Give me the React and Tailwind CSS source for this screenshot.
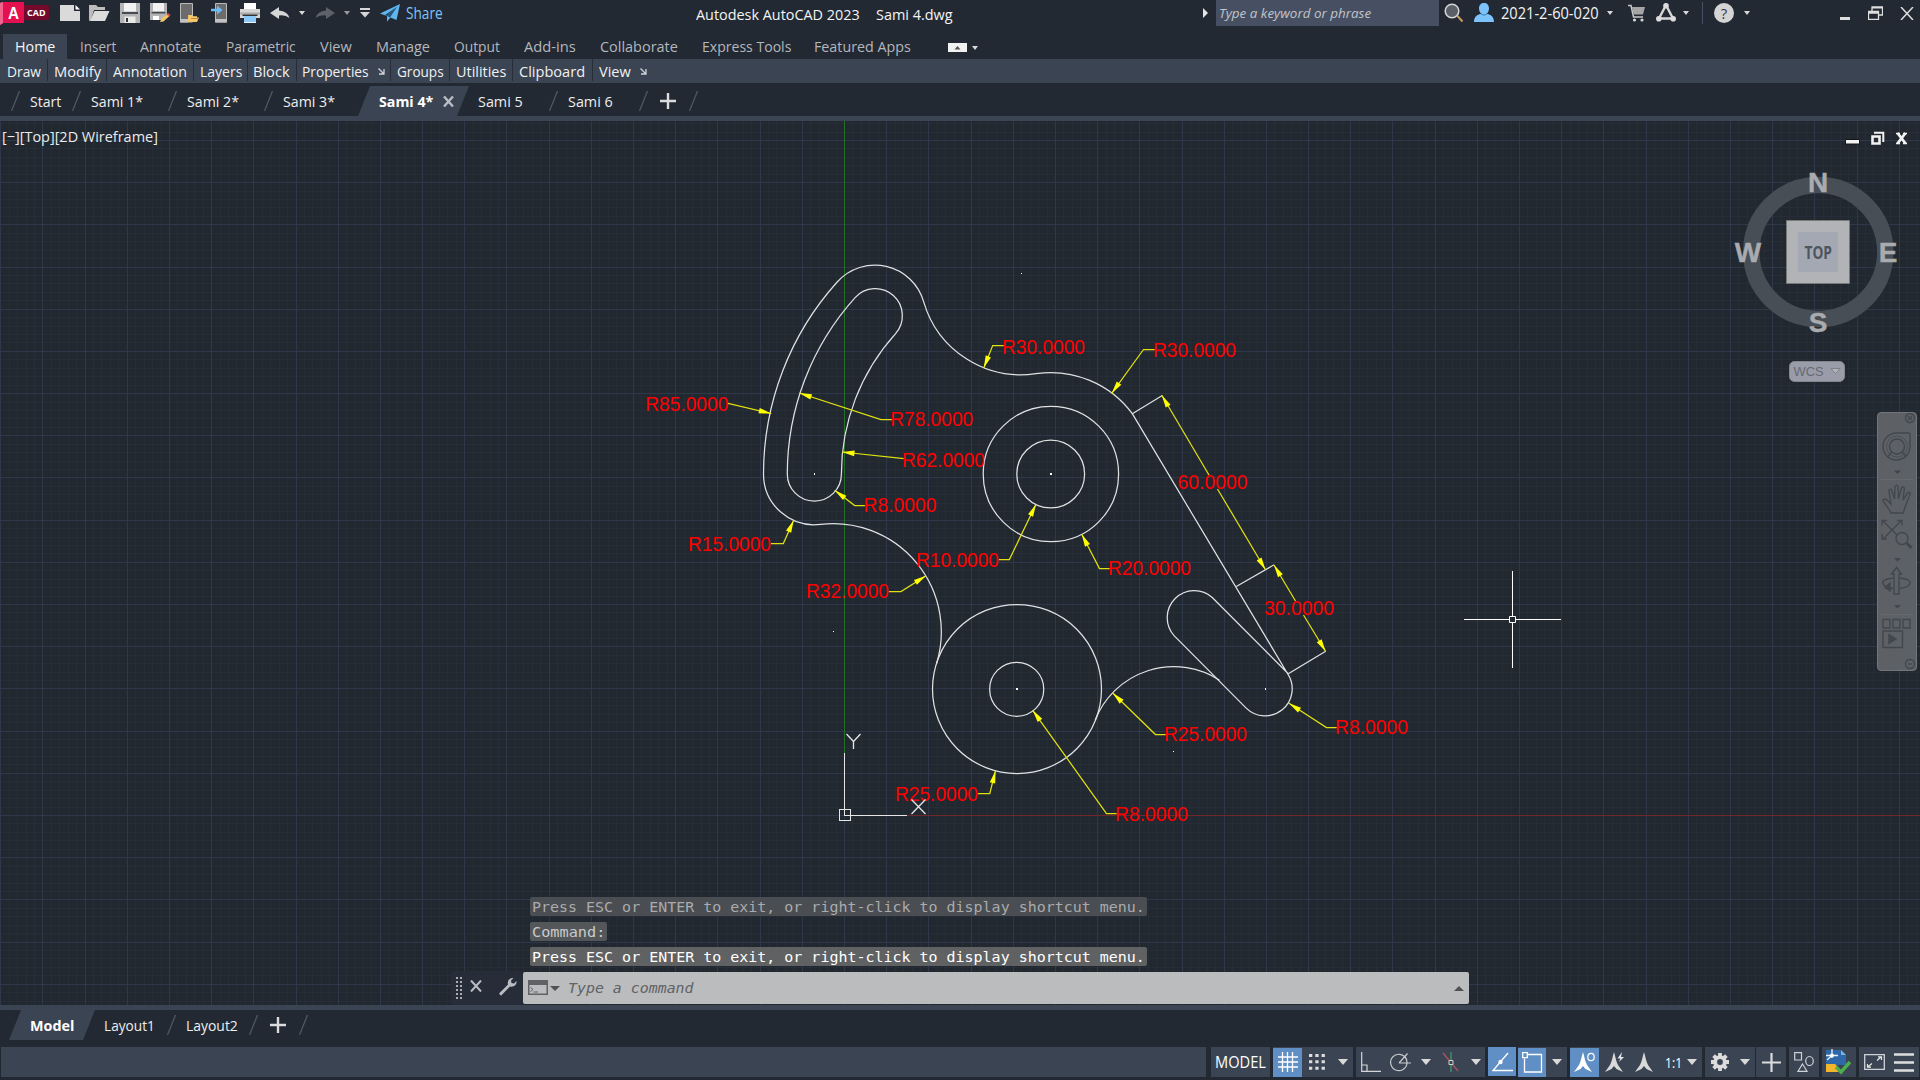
import React, { useLayoutEffect, useRef, useState } from "react";

/* Text that is condensed or widened to fill the width of its box. */
function Fit({ className = "", children }) {
  const box = useRef(null);
  const text = useRef(null);
  const [scale, setScale] = useState(1);
  useLayoutEffect(() => {
    setScale(box.current.clientWidth / text.current.offsetWidth);
  }, []);
  return (
    <span ref={box} className={"block shrink-0 whitespace-nowrap " + className}>
      <span ref={text} className="inline-block origin-left" style={{ transform: `scaleX(${scale})` }}>
        {children}
      </span>
    </span>
  );
}

function Icon({ w, h, className = "", children }) {
  return (
    <svg width={w} height={h} viewBox={`0 0 ${w} ${h}`} className={"block shrink-0 " + className} fill="none">
      {children}
    </svg>
  );
}

function Caret({ className = "", color = "#d9d9d9", w = 6, h = 4 }) {
  return (
    <Icon w={w} h={h} className={className}>
      <path d={`M0 0H${w}L${w / 2} ${h}Z`} fill={color} />
    </Icon>
  );
}

function Slash({ className = "" }) {
  return (
    <Icon w={9} h={20} className={className}>
      <path d="M8.5 0L0.5 20" stroke="#4d5766" strokeWidth="1.3" />
    </Icon>
  );
}

function Plus({ className = "" }) {
  return (
    <Icon w={16} h={16} className={className}>
      <path d="M8 0V16M0 8H16" stroke="#dcdcdc" strokeWidth="2.4" />
    </Icon>
  );
}

function TitleBar() {
  return (
    <div className="flex h-[34px] items-start">
      <Icon w={49} h={25}>
        <path d="M0 3L4 2V22L0 25Z" fill="#ee5c87" />
        <path d="M3 2H24V23H3L0 25V3Z" fill="#e51050" />
        <path d="M0 3L3 2V23L0 25Z" fill="#f0648e" />
        <path d="M24 5H47Q49 5 49 7V18Q49 20 47 20H24Z" fill="#730a2b" />
        <text x="8" y="19" fontSize="16" fontWeight="700" fill="#fff" fontFamily="Liberation Sans, sans-serif" textLength="11" lengthAdjust="spacingAndGlyphs">A</text>
        <text x="27" y="16" fontSize="9.5" fontWeight="700" fill="#fff" fontFamily="Open Sans, sans-serif" textLength="18.5" lengthAdjust="spacingAndGlyphs">CAD</text>
      </Icon>
      <Icon w={20} h={18} className="ml-[11px] mt-[4px]">
        <path d="M0 1H14V7H20V17H0Z" fill="#dadada" />
        <path d="M15.500 1L20 5.500H15.500Z" fill="#fff" />
      </Icon>
      <Icon w={21} h={18} className="ml-[9px] mt-[4px]">
        <path d="M0 17V1H7L9 3H16V6H5L2 16Z" fill="#bdbdbd" />
        <path d="M5.500 7H20.500L16 17H1Z" fill="#dcdcdc" />
      </Icon>
      <Icon w={20} h={20} className="ml-[10px] mt-[3px]">
        <path d="M0 0H20V20H0Z" fill="#b4b4b4" />
        <path d="M4 0H16V8.500H4Z" fill="#f2f2f2" />
        <path d="M2 9H18V11H2Z" fill="#454b55" />
        <path d="M4.500 13.500H15.500V20H4.500Z" fill="#e9e9e9" />
        <path d="M6 15H8V19H6Z" fill="#333" />
      </Icon>
      <Icon w={21} h={20} className="ml-[10px] mt-[3px]">
        <path d="M0 0H17V11L11 17H0Z" fill="#b4b4b4" />
        <path d="M3 0H14V8H3Z" fill="#f2f2f2" />
        <path d="M1.500 9H15.500V10.500H1.500Z" fill="#454b55" />
        <path d="M3 13H9V17H3Z" fill="#fff" />
        <path d="M10 19L11.500 15.500L17 11L19.500 13L13.500 18.500Z" fill="#f6c66b" />
        <path d="M16.500 11.500L18 10L20.500 12.200L19 13.800Z" fill="#e2574c" />
      </Icon>
      <Icon w={19} h={20} className="ml-[9px] mt-[3px]">
        <path d="M0.500 0.500H12.500V19H0.500Z" fill="#6c6c6c" stroke="#b9b9b9" />
        <path d="M0 16H8V19.500H0Z" fill="#c2c2c2" />
        <path d="M8 18V12H12L13 13.200H17V14.500H19L17 19H8Z" fill="#f6c66b" />
        <path d="M11 15.500H18" stroke="#b88a3a" />
      </Icon>
      <Icon w={17} h={20} className="ml-[12px] mt-[3px]">
        <path d="M4.500 0.500H15.500V19H4.500Z" fill="#6c6c6c" stroke="#b9b9b9" />
        <path d="M4 16H16V19.500H4Z" fill="#c2c2c2" />
        <path d="M0 5.800H6V2.500L11.500 7L6 11.500V8.300H0Z" fill="#6cbcf7" />
      </Icon>
      <Icon w={20} h={20} className="ml-[12px] mt-[3px]">
        <path d="M4 0H16V6H4Z" fill="#fff" />
        <path d="M0 6H20V15H0Z" fill="#d6d6d6" />
        <path d="M0 9.500H20V11.500H0Z" fill="#aaa" />
        <path d="M2.500 11.500H17.500V13H2.500Z" fill="#333" />
        <path d="M4 13H16V20H4Z" fill="#8cc9fb" />
        <path d="M4 19H16V20H4Z" fill="#e9f4ff" />
      </Icon>
      <Icon w={20} h={14} className="ml-[10px] mt-[6px]">
        <path d="M0 7L9 1V4.500Q17.500 5 19.500 12Q15 8.500 9 9.500V13Z" fill="#d5d5d5" />
      </Icon>
      <Caret className="ml-[9px] mt-[11px]" />
      <Icon w={20} h={14} className="ml-[10px] mt-[6px]">
        <path d="M20 7L11 1V4.500Q2.500 5 0.500 12Q5 8.500 11 9.500V13Z" fill="#5d6269" />
      </Icon>
      <Caret className="ml-[9px] mt-[11px]" color="#999" />
      <Icon w={10} h={10} className="ml-[10px] mt-[8px]">
        <path d="M0 0H10V2H0ZM0 4H10L5 9.500Z" fill="#d5d5d5" />
      </Icon>
      <Icon w={20} h={18} className="ml-[10px] mt-[4px]">
        <path d="M0 9.500L20 0L16.500 16L10.500 13.500L7 17.500V12Z" fill="#62b5ee" />
        <path d="M7 12L17 3L10 13.500Z" fill="#25577c" />
        <path d="M7 12L17.500 2.500L5 11Z" fill="#1f4461" />
      </Icon>
      <Fit className="ml-[6px] mt-[1px] w-[37px] text-[15.500px] leading-[25px] text-[#7cc4f8]">Share</Fit>
      <Fit className="ml-[253px] mt-[2px] w-[164px] text-[15px] leading-[24px] text-[#f4f4f4]">Autodesk AutoCAD 2023</Fit>
      <Fit className="ml-[16px] mt-[2px] w-[77px] text-[15px] leading-[24px] text-[#f4f4f4]">Sami 4.dwg</Fit>
      <Icon w={5} h={10} className="ml-[250px] mt-[8px]">
        <path d="M0 0L5 5L0 10Z" fill="#e4e4e4" />
      </Icon>
      <div className="ml-[8px] h-[26px] w-[223px] bg-[#475063] pl-[3px]">
        <Fit className="w-[152px] text-[13.500px] italic leading-[26px] text-[#c1c4ca]">Type a keyword or phrase</Fit>
      </div>
      <Icon w={20} h={20} className="ml-[5px] mt-[3px]">
        <path d="M13.500 13L18.500 18.500" stroke="#c89a62" strokeWidth="2" />
        <circle cx="8" cy="8" r="6.800" fill="#596068" stroke="#d6d6d6" strokeWidth="1.500" />
      </Icon>
      <Icon w={20} h={20} className="ml-[10px] mt-[3px]">
        <path d="M10 0C13 0 15 2 15 5.500C15 8 13.800 9.800 12.500 10.800C17 11.500 20 14 20 19H0C0 14 3 11.500 7.500 10.800C6.200 9.800 5 8 5 5.500C5 2 7 0 10 0Z" fill="#7cc4fb" />
        <path d="M7 11Q10 13.500 13 11" stroke="#3e7fb0" />
      </Icon>
      <Fit className="ml-[7px] mt-[1px] w-[98px] text-[15.500px] leading-[25px] text-[#f4f4f4]">2021-2-60-020</Fit>
      <Caret className="ml-[8px] mt-[11px]" />
      <Icon w={18} h={18} className="ml-[15px] mt-[4px]">
        <path d="M0 1.500H3L5.500 13H15" stroke="#c9c9c9" strokeWidth="1.500" />
        <path d="M4 3H17L15 10.500H5.500Z" fill="#a5a5a5" />
        <circle cx="6.500" cy="16" r="1.600" fill="#d6d6d6" />
        <circle cx="14" cy="16" r="1.600" fill="#d6d6d6" />
      </Icon>
      <Icon w={20} h={19} className="ml-[10px] mt-[3px]">
        <path d="M10 2L17 15.500H3Z" stroke="#d6d6d6" strokeWidth="2.400" />
        <circle cx="10" cy="2.800" r="2.800" fill="#dcdcdc" />
        <circle cx="2.800" cy="15.700" r="2.800" fill="#dcdcdc" />
        <circle cx="17.200" cy="15.700" r="2.800" fill="#dcdcdc" />
      </Icon>
      <Caret className="ml-[7px] mt-[11px]" />
      <div className="ml-[13px] mt-[2px] h-[22px] w-px bg-[#465063]" />
      <Icon w={20} h={20} className="ml-[11px] mt-[3px]">
        <circle cx="10" cy="10" r="10" fill="#d4d4d4" />
        <text x="10" y="15.500" fontSize="15" fill="#333a44" textAnchor="middle" fontFamily="Open Sans, sans-serif">?</text>
      </Icon>
      <Caret className="ml-[10px] mt-[11px]" />
      <Icon w={10} h={3} className="ml-[90px] mt-[17px]">
        <path d="M0 0H10V3H0Z" fill="#dedede" />
      </Icon>
      <Icon w={15} h={14} className="ml-[18px] mt-[6px]">
        <path d="M0.500 5.500H10.500V13.300H0.500ZM0.500 7H10.500M4 5V1H14.500V9H11M4 1.800H14.500" stroke="#dedede" strokeWidth="1.300" />
      </Icon>
      <Icon w={14} h={13} className="ml-[17px] mt-[7px]">
        <path d="M1 0L13 13M13 0L1 13" stroke="#dedede" strokeWidth="1.500" />
      </Icon>
    </div>
  );
}

function RibbonTabs() {
  const t = "text-[15px] leading-[25px] text-[#b4b7bc] ";
  return (
    <div className="flex h-[25px] items-start pl-[3px]">
      <div className="h-[25px] w-[64px] bg-[#3b4453] pl-[12px]">
        <Fit className="w-[40px] text-[15px] leading-[25px] text-[#f5f5f5]">Home</Fit>
      </div>
      <Fit className={t + "ml-[13px] w-[36px]"}>Insert</Fit>
      <Fit className={t + "ml-[24px] w-[61px]"}>Annotate</Fit>
      <Fit className={t + "ml-[25px] w-[70px]"}>Parametric</Fit>
      <Fit className={t + "ml-[24px] w-[32px]"}>View</Fit>
      <Fit className={t + "ml-[24px] w-[54px]"}>Manage</Fit>
      <Fit className={t + "ml-[24px] w-[46px]"}>Output</Fit>
      <Fit className={t + "ml-[24px] w-[52px]"}>Add-ins</Fit>
      <Fit className={t + "ml-[24px] w-[78px]"}>Collaborate</Fit>
      <Fit className={t + "ml-[24px] w-[89px]"}>Express Tools</Fit>
      <Fit className={t + "ml-[23px] w-[97px]"}>Featured Apps</Fit>
      <Icon w={19} h={9} className="ml-[37px] mt-[9px]">
        <path d="M0 0H19V9H0Z" fill="#f2f2f2" />
        <path d="M6.500 6.500H12.500L9.500 3Z" fill="#555" />
      </Icon>
      <Caret className="ml-[5px] mt-[12px]" />
    </div>
  );
}

function Launcher({ className }) {
  return (
    <Icon w={7} h={7} className={className}>
      <path d="M0.500 0.500L5.500 5.500M6 1V6H1" stroke="#d0d3d8" strokeWidth="1.300" />
    </Icon>
  );
}

function RibbonPanels() {
  const t = "text-[15px] leading-[25px] text-[#f1f1f1] ";
  const d = <div className="h-[22px] w-px shrink-0 bg-[#262d38]" />;
  return (
    <div className="flex h-[24px] items-start bg-[#3b4453] pl-[7px]">
      <Fit className={t + "mr-[6px] w-[34px]"}>Draw</Fit>
      {d}
      <Fit className={t + "ml-[6px] mr-[5px] w-[47px]"}>Modify</Fit>
      {d}
      <Fit className={t + "ml-[6px] mr-[6px] w-[74px]"}>Annotation</Fit>
      {d}
      <Fit className={t + "ml-[6px] mr-[5px] w-[42px]"}>Layers</Fit>
      {d}
      <Fit className={t + "ml-[5px] mr-[6px] w-[37px]"}>Block</Fit>
      {d}
      <Fit className={t + "ml-[5px] w-[67px]"}>Properties</Fit>
      <Launcher className="ml-[9px] mr-[5px] mt-[9px]" />
      {d}
      <Fit className={t + "ml-[6px] mr-[5px] w-[47px]"}>Groups</Fit>
      {d}
      <Fit className={t + "ml-[6px] mr-[6px] w-[50px]"}>Utilities</Fit>
      {d}
      <Fit className={t + "ml-[6px] mr-[7px] w-[66px]"}>Clipboard</Fit>
      {d}
      <Fit className={t + "ml-[6px] w-[32px]"}>View</Fit>
      <Launcher className="ml-[9px] mt-[9px]" />
    </div>
  );
}

function FileTabs() {
  const t = "text-[15px] leading-[37px] text-[#eeeeee] ";
  return (
    <div className="flex h-[33px] items-start pl-[11px]">
      <Slash className="mt-[8px]" />
      <Fit className={t + "ml-[10px] w-[31px]"}>Start</Fit>
      <Slash className="ml-[11px] mt-[8px]" />
      <Fit className={t + "ml-[10px] w-[52px]"}>Sami 1*</Fit>
      <Slash className="ml-[25px] mt-[8px]" />
      <Fit className={t + "ml-[10px] w-[52px]"}>Sami 2*</Fit>
      <Slash className="ml-[25px] mt-[8px]" />
      <Fit className={t + "ml-[10px] w-[52px]"}>Sami 3*</Fit>
      <div className="ml-[23px] mt-[3px] flex h-[30px] w-[111px] bg-[#3b4453] pl-[21px] [clip-path:polygon(12px_0,111px_0,99px_100%,0_100%)]">
        <Fit className="w-[54px] text-[15px] font-bold leading-[31px] text-white">Sami 4*</Fit>
        <Icon w={11} h={11} className="ml-[10px] mt-[10px]">
          <path d="M1 0.500L10 10.500M10 0.500L1 10.500" stroke="#b9bdc4" strokeWidth="2.400" />
        </Icon>
      </div>
      <Fit className={t + "ml-[9px] w-[45px]"}>Sami 5</Fit>
      <Slash className="ml-[26px] mt-[8px]" />
      <Fit className={t + "ml-[10px] w-[45px]"}>Sami 6</Fit>
      <Slash className="ml-[26px] mt-[8px]" />
      <Plus className="ml-[12px] mt-[10px]" />
      <Slash className="ml-[13px] mt-[8px]" />
    </div>
  );
}

const PITCH = 42.19 / 5;
const ORIGIN = { x: 844, y: 815 };
const columns = [];
for (let i = -101; i <= 128; i++) {
  const x = Math.round(ORIGIN.x + i * PITCH);
  if (x >= 0 && x < 1920) columns.push({ x, major: i % 5 === 0 });
}
const rows = [];
for (let i = -83; i <= 23; i++) {
  const y = Math.round(ORIGIN.y + i * PITCH);
  if (y >= 121 && y < 1005) rows.push({ y, major: i % 5 === 0 });
}

function Grid() {
  const v = (m) => columns.filter((c) => c.major === m).map((c) => `M${c.x} 121h1v884h-1z`).join("");
  const h = (m) => rows.filter((r) => r.major === m).map((r) => `M0 ${r.y}h1920v1h-1920z`).join("");
  return (
    <g shapeRendering="crispEdges">
      <path d={v(false) + h(false)} fill="#262d37" />
      <path d={v(true) + h(true)} fill="#2f384a" />
      <path d="M844 121h1v632h-1z" fill="#257029" />
      <path d="M907 815h1013v1h-1013z" fill="#70262b" />
    </g>
  );
}

/* Leaders: the first point of each line is the arrow tip. */
const leaders = [
  { text: "R30.0000", x: 1003, y: 353.7, w: 82, pts: [[983.7, 368], [992.7, 345.5], [1004, 345.5]] },
  { text: "R30.0000", x: 1154, y: 357, w: 82, pts: [[1111.7, 393.3], [1143.5, 349.5], [1155, 349.5]] },
  { text: "R85.0000", x: 646.3, y: 411, w: 82, pts: [[771.3, 413.5], [728, 403.3]] },
  { text: "R78.0000", x: 891.2, y: 425.7, w: 82, pts: [[799.3, 393], [881, 419.5], [892, 419.5]] },
  { text: "R62.0000", x: 903, y: 466.7, w: 82, pts: [[842, 452], [904, 458.7]] },
  { text: "R8.0000", x: 864.5, y: 511.5, w: 72, pts: [[834.7, 490.3], [854.7, 505.5], [865, 505.5]] },
  { text: "R15.0000", x: 689, y: 550.7, w: 82, pts: [[793.7, 520.3], [783.3, 543.5], [771, 543.5]] },
  { text: "R10.0000", x: 917, y: 566.7, w: 82, pts: [[1036, 504.3], [1009.4, 559.5], [999, 559.5]] },
  { text: "R20.0000", x: 1109, y: 574.7, w: 82, pts: [[1081.7, 534.3], [1099.5, 568.5], [1110, 568.5]] },
  { text: "R32.0000", x: 807, y: 597.5, w: 82, pts: [[926, 575.7], [901, 591.5], [889, 591.5]] },
  { text: "R25.0000", x: 896, y: 800.5, w: 82, pts: [[995.5, 770.7], [989.8, 793.5], [978, 793.5]] },
  { text: "R8.0000", x: 1116, y: 820.5, w: 72, pts: [[1032.7, 710.3], [1106.5, 813.5], [1117, 813.5]] },
  { text: "R25.0000", x: 1165, y: 740.5, w: 82, pts: [[1112.7, 693], [1155.5, 734.5], [1166, 734.5]] },
  { text: "R8.0000", x: 1336, y: 733.5, w: 72, pts: [[1289, 703.3], [1326.5, 727.5], [1337, 727.5]] },
  { text: "60.0000", x: 1178.5, y: 489, w: 69, pts: [[1161.8, 395.3], [1209, 475]] },
  { text: null, pts: [[1265.5, 569.8], [1217.5, 489]] },
  { text: "30.0000", x: 1265, y: 615, w: 69, pts: [[1274, 565], [1295.5, 601]] },
  { text: null, pts: [[1325.7, 651.5], [1303.5, 615]] },
];

function Arrow({ tip, from }) {
  const dx = from[0] - tip[0];
  const dy = from[1] - tip[1];
  const len = Math.hypot(dx, dy);
  const ux = dx / len;
  const uy = dy / len;
  const bx = tip[0] + ux * 12.5;
  const by = tip[1] + uy * 12.5;
  return <path d={`M${tip[0]} ${tip[1]}L${bx - uy * 2.8} ${by + ux * 2.8}L${bx + uy * 2.8} ${by - ux * 2.8}Z`} fill="#ffff00" />;
}

function Drawing() {
  return (
    <svg width="1920" height="884" viewBox="0 121 1920 884" className="block">
      <Grid />
      <g fill="none" stroke="#dfe1e3" strokeWidth="1.250">
        <path d="M763.500 474A287.300 287.300 0 0 1 837.200 282A50.700 50.700 0 0 1 923.700 301.800A101.400 101.400 0 0 0 1036 373.650A101.400 101.400 0 0 1 1132.300 413.700L1287.900 674.200A27.040 27.040 0 0 1 1246.200 708.100L1174.300 635.900A27.040 27.040 0 0 1 1212.500 597.700L1288.300 673.700" />
        <path d="M763.500 474A50.700 50.700 0 0 0 820.700 524.300A108.160 108.160 0 0 1 936.500 663.700" />
        <path d="M787.300 474A263.600 263.600 0 0 1 855.100 297.600A27.040 27.040 0 0 1 895.400 333.800A209.600 209.600 0 0 0 841.400 474A27.040 27.040 0 0 1 787.300 474Z" />
        <circle cx="1050.900" cy="474" r="67.700" />
        <circle cx="1050.700" cy="474" r="33.900" />
        <circle cx="1017" cy="689" r="84.500" />
        <circle cx="1016.700" cy="689.300" r="27.040" />
        <path d="M1095.100 720.200A84.500 84.500 0 0 1 1219.500 680.200" />
        <path d="M1132.300 413.700L1162.300 395.500M1236.300 586.500L1274 564.800M1288.300 673.700L1325.700 651.300" />
      </g>
      <path d="M814 473h1v2h-1zM1050 473h2v2h-2zM1016 688h2v2h-2zM1265 688h1v2h-1zM1021 273h1v1h-1zM833 631h1v1h-1zM1173 751h1v1h-1z" fill="#fff" />
      <g fill="none" stroke="#e0e010" strokeWidth="1.250">
        {leaders.map((l, i) => (
          <polyline key={i} points={l.pts.map((p) => p.join(",")).join(" ")} />
        ))}
      </g>
      {leaders.map((l, i) => (
        <Arrow key={i} tip={l.pts[0]} from={l.pts[1]} />
      ))}
      <g fill="#ff0000" fontSize="19.600" fontFamily="Liberation Sans, Arial, sans-serif">
        {leaders.filter((l) => l.text).map((l, i) => (
          <text key={i} x={l.x - 1} y={l.y} textLength={l.w + 1} lengthAdjust="spacingAndGlyphs">{l.text}</text>
        ))}
      </g>
      <g fill="none" stroke="#e6e6e6" strokeWidth="1.300">
        <path d="M844.500 753V815.500H907" shapeRendering="crispEdges" />
        <path d="M839.500 809.500H850.500V820.500H839.500Z" shapeRendering="crispEdges" />
        <path d="M846.500 734L853.500 741.500L860.500 734M853.500 741.500V749" />
        <path d="M911.500 799.500L925.500 814M925.500 799.500L911.500 814" />
      </g>
      <path d="M1464 619h45v1h-45zM1516 619h45v1h-45zM1512 571h1v45h-1zM1512 623h1v45h-1z" fill="#fff" />
      <path d="M1509.500 616.500h6v6h-6z" stroke="#fff" fill="none" />
    </svg>
  );
}

function ViewCube() {
  return (
    <svg width="150" height="240" viewBox="1735 160 150 240" className="absolute left-[1735px] top-[39px] overflow-visible">
      <circle cx="1818.300" cy="252" r="67" fill="none" stroke="#484e56" strokeWidth="16.500" />
      <path d="M1786.500 220.500h63v63h-63z" fill="#b1b3b7" stroke="#757a77" />
      <path d="M1798 232h40v40h-40z" fill="#a4a8b2" />
      <g fill="#a9abaf" stroke="#a9abaf" strokeWidth="0.400" fontFamily="Liberation Sans, Arial, sans-serif" fontWeight="700" fontSize="28" textAnchor="middle">
        <text x="1818" y="191.500">N</text>
        <text x="1818" y="332">S</text>
        <text x="1748" y="262">W</text>
        <text x="1888" y="262">E</text>
      </g>
      <text x="1804.500" y="258.500" fill="#4d555e" fontFamily="Open Sans, sans-serif" fontWeight="700" fontSize="18.500" textLength="27.500" lengthAdjust="spacingAndGlyphs">TOP</text>
      <rect x="1789.500" y="361.500" width="55" height="20" rx="5" fill="#9a9ca9" stroke="#85878f" />
      <text x="1793.500" y="376" fill="#666a72" fontFamily="Liberation Sans, Arial, sans-serif" fontSize="13.500" textLength="30" lengthAdjust="spacingAndGlyphs">WCS</text>
      <path d="M1831 368.500H1840L1835.500 373.500Z" fill="#b4b6be" stroke="#7d8089" />
    </svg>
  );
}

function NavBar() {
  return (
    <svg width="40" height="259" viewBox="0 0 40 259" className="absolute left-[1877px] top-[291px]" fill="none">
      <rect x="0.500" y="0.500" width="39" height="258" rx="3.500" fill="#5d6166" stroke="#72767a" />
      <g stroke="#42474e" strokeWidth="1.400">
        <circle cx="33" cy="6" r="4.500" />
        <path d="M31 4L35 8M35 4L31 8" />
        <path d="M20 21H31Q33 21 33 23V35A13.500 13.500 0 1 1 20 21Z" />
        <circle cx="20" cy="34.500" r="7.500" />
        <circle cx="20" cy="34.500" r="10.500" strokeWidth="0.700" />
        <path d="M15 40L11 44.500M25 40L29 44.500" />
        <path d="M13 99C10 94 7 91 6 88.500C6 86.500 8.500 86.500 10 88L14 92L12 79C12 76.500 14.500 76.500 15 79L17.500 87L18 75C18.200 72.500 20.800 72.500 21 75L21.500 87L24.500 76C25.200 74 27.500 74.500 27.300 77L26 88L30.500 81C31.800 79.500 33.800 80.500 33 82.500C31 87 30 91 28 95Q27 98 26.500 101H14Z" />
        <path d="M6 109L24 127M24 109L6 127M5 113.500V108.500H10M20 108.500H25V113.500M5 122V127H10" />
        <circle cx="25" cy="126.500" r="6" fill="#5d6166" />
        <path d="M29.500 131L34.500 136" strokeWidth="3" />
        <path d="M17 182V162H14.500L19.500 155.500L24.500 162H22V182Z" />
        <path d="M16 166C8 167 5 169 6 171.500C7 175 12 176 16 176.500M23 166C31 167 34 169 33 172C31 175.500 27 176 22 176.500" />
        <path d="M13 171V179L8 175.500Z" fill="#42474e" />
        <path d="M6 207.500H13V216H6ZM16 207.500H23V216H16ZM26 207.500H33V216H26ZM6 219H25.500V235.500H6Z" />
        <path d="M12 222.500L19 227L12 231.500Z" fill="#42474e" />
        <circle cx="33" cy="252" r="4.500" />
        <path d="M31 252H35" />
      </g>
      <path d="M17 58.500H24L20.500 62ZM17 146H24L20.500 149.500ZM17 193H24L20.500 196.500Z" fill="#42474e" />
      <path d="M4 67.500H36M4 202.500H36" stroke="#666a6f" />
    </svg>
  );
}

function CommandLine() {
  return (
    <div className="absolute bottom-0 left-[451px] w-[1020px] font-['DejaVu_Sans_Mono',monospace] text-[14.200px]">
      <div className="flex flex-col items-start gap-[6px] pl-[79px]">
        <div className="h-[19px] rounded-[2px] bg-[#4a4d51] px-[2px]">
          <Fit className="w-[613px] leading-[20px] text-[#a9abad]">Press ESC or ENTER to exit, or right-click to display shortcut menu.</Fit>
        </div>
        <div className="h-[19px] rounded-[2px] bg-[#54575a] px-[2px]">
          <Fit className="w-[73px] leading-[20px] text-[#c9cacb]">Command:</Fit>
        </div>
        <div className="h-[19px] rounded-[2px] bg-[#606163] px-[2px]">
          <Fit className="w-[613px] leading-[20px] text-[#ffffff]">Press ESC or ENTER to exit, or right-click to display shortcut menu.</Fit>
        </div>
      </div>
      <div className="mt-[5px] flex h-[34px]">
        <div className="flex h-[34px] w-[72px] items-start rounded-[3px] bg-[#272c39] pl-[5px]">
          <Icon w={6} h={22} className="mt-[6px]">
            <path d="M1 0V22M5 0V22" stroke="#b9bcc0" strokeWidth="1.800" strokeDasharray="2 2" />
          </Icon>
          <Icon w={12} h={12} className="ml-[8px] mt-[9px]">
            <path d="M1 0.500L11 11.500M11 0.500L1 11.500" stroke="#b9bcc0" strokeWidth="2" />
          </Icon>
          <Icon w={19} h={19} className="ml-[16px] mt-[6px]">
            <path d="M1 16.500L10 7.500C9 4 11.500 0.500 15.500 1L13 3.500L13.500 6L16 6.500L18.500 4C19 8 15.500 10.500 12 9.500L3 18.800Z" fill="#b9bcc0" />
          </Icon>
        </div>
        <div className="mt-px flex h-[32px] w-[946px] items-start rounded-[2px] bg-[#bbbcbe] pl-[5px]">
          <Icon w={20} h={16} className="mt-[8px]">
            <path d="M0.750 0.750H19.250V14.250H0.750Z" stroke="#606266" strokeWidth="1.500" />
            <path d="M1 1H19V5H1Z" fill="#606266" />
            <path d="M2.500 7.500L5 9.500L2.500 11.500M5.500 12H10" stroke="#606266" />
          </Icon>
          <Caret className="ml-[2px] mt-[14px]" w={10} h={5} color="#4f5153" />
          <Fit className="ml-[8px] w-[126px] italic leading-[33px] text-[#606265]">Type a command</Fit>
          <Icon w={10} h={5} className="ml-[760px] mt-[14px]">
            <path d="M0 5H10L5 0Z" fill="#4f5153" />
          </Icon>
        </div>
      </div>
    </div>
  );
}

function Viewport() {
  return (
    <div className="relative h-[884px] overflow-hidden bg-[#212830]">
      <Drawing />
      <Fit className="absolute left-[2px] top-[3px] w-[156px] text-[15px] leading-[24px] text-[#ececec]">[−][Top][2D Wireframe]</Fit>
      <svg width="70" height="20" viewBox="1842 128 70 20" className="absolute left-[1842px] top-[7px]" fill="none">
        <path d="M1845.500 139.500h14v4.500h-14z" fill="#f4f4f4" stroke="#111519" />
        <path d="M1872.500 136.500h7v7h-7z" stroke="#f2f2f2" strokeWidth="2.600" />
        <path d="M1874 132.700H1883.300V142" stroke="#f2f2f2" strokeWidth="2" />
        <path d="M1897.500 133L1905.500 143.500M1905.500 133L1897.500 143.500" stroke="#f4f4f4" strokeWidth="2.800" />
        <path d="M1896 133.500H1900M1903 133.500H1907M1896 143.500H1900M1903 143.500H1907" stroke="#f4f4f4" strokeWidth="1.500" />
      </svg>
      <ViewCube />
      <NavBar />
      <CommandLine />
    </div>
  );
}

function LayoutTabs() {
  const t = "text-[15px] leading-[31px] text-[#eeeeee] ";
  return (
    <div className="flex h-[37px] items-start pl-[9px]">
      <div className="h-[30px] w-[86px] bg-[#3b4453] pl-[21px] [clip-path:polygon(12px_0,100%_0,74px_100%,0_100%)]">
        <Fit className="w-[44px] text-[15px] font-bold leading-[31px] text-white">Model</Fit>
      </div>
      <Fit className={t + "ml-[9px] w-[51px]"}>Layout1</Fit>
      <Slash className="ml-[12px] mt-[5px]" />
      <Fit className={t + "ml-[10px] w-[52px]"}>Layout2</Fit>
      <Slash className="ml-[11px] mt-[5px]" />
      <Plus className="ml-[12px] mt-[7px]" />
      <Slash className="ml-[13px] mt-[5px]" />
    </div>
  );
}

function StatusCaret({ className }) {
  return <Caret className={className} w={10} h={6} />;
}

const annotationMark = "M9 0C10.500 5 11 9 13 13L18 20L11.500 17L9 14L6.500 17L0 20L5 13C7 9 7.500 5 9 0Z";

function StatusBar() {
  const block = "flex h-[30px] shrink-0 items-center bg-[#3b4453] ";
  const active = "flex h-[29px] shrink-0 items-center justify-center bg-[#5f8fc5] ";
  return (
    <div className="flex h-[33px] items-start pl-px">
      <div className="h-[30px] w-[1205px] shrink-0 bg-[#3b4453]" />
      <div className={block + "ml-[5px] w-[59px] pl-[4px]"}>
        <Fit className="w-[51px] text-[15.500px] leading-[30px] text-white">MODEL</Fit>
      </div>
      <div className={block + "ml-[3px] w-[80px]"}>
        <div className={active + "w-[29px]"}>
          <Icon w={20} h={20}>
            <path d="M4.500 0V20M9.500 0V20M14.500 0V20M0 5H20M0 10H20M0 15H20" stroke="#fff" strokeWidth="1.300" />
          </Icon>
        </div>
        <Icon w={16} h={16} className="ml-[7px]">
          <path d="M0 1.500H16M0 7.800H16M0 14.200H16" stroke="#dcdcdc" strokeWidth="3" strokeDasharray="3.300 3" />
        </Icon>
        <StatusCaret className="ml-[13px]" />
      </div>
      <div className={block + "ml-[3px] w-[129px] pl-[5px]"}>
        <Icon w={20} h={20}>
          <path d="M0.700 0V19.300H20M0.700 13H6V19" stroke="#d4d6d9" strokeWidth="1.200" />
        </Icon>
        <Icon w={21} h={20} className="ml-[9px]">
          <path d="M16 6.500A8.200 8.200 0 1 0 17 11M9 11H21M9 11L17.500 1.500M14 4C16.500 6 17.500 9 16.500 13" stroke="#c7cace" strokeWidth="1.200" />
        </Icon>
        <StatusCaret className="ml-[10px]" />
        <Icon w={18} h={20} className="ml-[11px]">
          <path d="M9 0V20" stroke="#43a06a" strokeWidth="1.200" />
          <path d="M1 1L16 19" stroke="#b05560" strokeWidth="1.200" />
          <path d="M7 8.500H11V12.500H7Z" stroke="#cfd1d4" fill="#3b4453" />
        </Icon>
        <StatusCaret className="ml-[11px]" />
      </div>
      <div className={active + "ml-[3px] w-[28px]"}>
        <Icon w={21} h={20}>
          <path d="M16 1L1 18.500H21" stroke="#fff" strokeWidth="1.300" />
          <circle cx="8.500" cy="10" r="2.200" fill="#fff" />
        </Icon>
      </div>
      <div className={block + "ml-[2px] w-[49px]"}>
        <div className={active + "w-[28px]"}>
          <Icon w={21} h={21}>
            <path d="M6 2.500H19.500V20H2.500V6.500" stroke="#fff" strokeWidth="1.300" />
            <path d="M0.700 0.700H5.300V5.700H0.700Z" stroke="#fff" strokeWidth="1.300" />
          </Icon>
        </div>
        <StatusCaret className="ml-[6px]" />
      </div>
      <div className={block + "ml-[3px] w-[132px]"}>
        <div className={active + "w-[29px]"}>
          <Icon w={21} h={21}>
            <path d={annotationMark} fill="#fff" />
            <ellipse cx="17" cy="5" rx="3.200" ry="3.700" stroke="#fff" strokeWidth="1.200" />
          </Icon>
        </div>
        <Icon w={20} h={20} className="ml-[6px]">
          <path d={annotationMark} fill="#d9d9d9" />
          <path d="M17 0L12.500 6.500H15.500L14 10L19 5H16Z" fill="#e6e6e6" />
        </Icon>
        <Icon w={18} h={20} className="ml-[10px]">
          <path d={annotationMark} fill="#d9d9d9" />
        </Icon>
        <Fit className="ml-[12px] w-[17px] text-[15px] leading-[30px] text-white">1:1</Fit>
        <StatusCaret className="ml-[5px]" />
      </div>
      <div className={block + "ml-[3px] w-[50px] pl-[5px]"}>
        <Icon w={20} h={20}>
          <path d="M10 1V19M1 10H19M3.600 3.600L16.400 16.400M16.400 3.600L3.600 16.400" stroke="#dcdcdc" strokeWidth="3.800" />
          <circle cx="10" cy="10" r="6.800" fill="#dcdcdc" />
          <circle cx="10" cy="10" r="2.900" fill="#3b4453" />
        </Icon>
        <StatusCaret className="ml-[10px]" />
      </div>
      <div className={block + "ml-px w-[30px] justify-center"}>
        <Icon w={19} h={19}>
          <path d="M9.500 0V19M0 9.500H19" stroke="#dcdcdc" strokeWidth="2.200" />
        </Icon>
      </div>
      <div className={block + "ml-[3px] w-[30px] justify-center"}>
        <Icon w={20} h={20}>
          <path d="M0.700 0.700H7.500V8H0.700ZM8.500 12L13 19.300H4Z" stroke="#cfd2d6" strokeWidth="1.200" />
          <ellipse cx="15.500" cy="9" rx="3.800" ry="4.500" stroke="#cfd2d6" strokeWidth="1.200" />
        </Icon>
      </div>
      <div className={block + "ml-[3px] w-[34px] pl-[4px]"}>
        <Icon w={26} h={26}>
          <path d="M0 1H15L20 6V16H0Z" fill="#2e68a8" />
          <path d="M15 1L20 6H15Z" fill="#7fb0e0" />
          <path d="M6 0V9M0 6.500H12M6 6.500L1 11" stroke="#e8f1fb" strokeWidth="1.300" />
          <circle cx="6" cy="6.500" r="2" fill="#fff" />
          <path d="M0 15H9L12 18V23H0Z" fill="#f3b52b" />
          <path d="M10 18L15 23L24 13" stroke="#4cae4c" strokeWidth="3.400" />
        </Icon>
      </div>
      <div className={block + "ml-[3px] w-[60px] pl-[5px]"}>
        <Icon w={21} h={16}>
          <path d="M0.700 0.700H20.300V15.300H0.700Z" stroke="#cfd2d6" strokeWidth="1.300" />
          <path d="M13 6.500L17 3M17.500 6V2.800H14M8 9.500L4 12.800M3.500 10V13.200H7" stroke="#e6e6e6" strokeWidth="1.200" />
        </Icon>
        <Icon w={20} h={19} className="ml-[9px]">
          <path d="M0 1.500H20M0 9.500H20M0 17.500H20" stroke="#dedede" strokeWidth="2.400" />
        </Icon>
      </div>
    </div>
  );
}

export default function App() {
  return (
    <div className="flex h-[1080px] w-[1920px] flex-col overflow-hidden bg-[#222933] font-['Open_Sans','Noto_Sans',sans-serif]">
      <TitleBar />
      <RibbonTabs />
      <RibbonPanels />
      <FileTabs />
      <div className="h-[5px] bg-[#3b4453]" />
      <Viewport />
      <div className="h-[5px] bg-[#3b4453]" />
      <LayoutTabs />
      <StatusBar />
    </div>
  );
}
